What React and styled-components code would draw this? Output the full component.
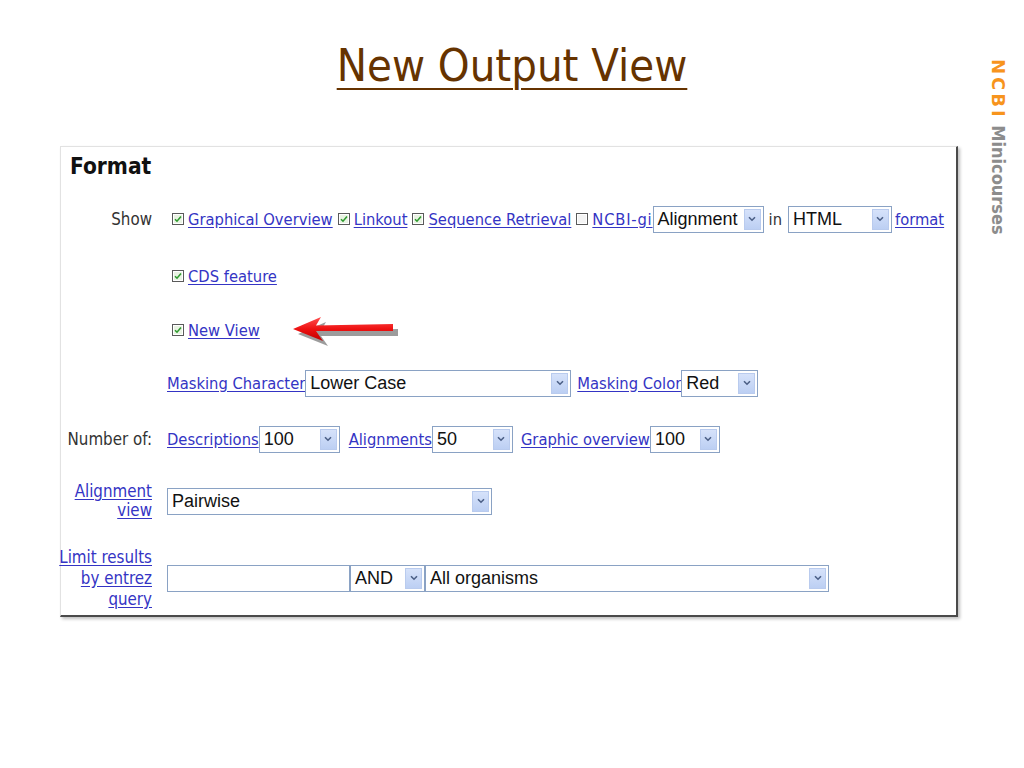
import styled, { createGlobalStyle } from "styled-components";

const GlobalStyle = createGlobalStyle`
  html, body {
    margin: 0;
    padding: 0;
    background: #ffffff;
  }
  body {
    font-family: "DejaVu Sans Condensed", "DejaVu Sans", sans-serif;
  }
`;

const Slide = styled.div`
  width: 1024px;
  height: 768px;
  display: grid;
  grid-template-columns: 60px 898px 1fr;
  grid-template-rows: 146px auto;
`;

const Title = styled.h1`
  grid-column: 1 / -1;
  grid-row: 1;
  margin: 0;
  padding-top: 38px;
  text-align: center;
  font-family: "DejaVu Sans Condensed", "DejaVu Sans", sans-serif;
  font-weight: normal;
  font-size: 45px;
  line-height: 56px;
  color: #663300;
  text-decoration: underline;
  text-decoration-thickness: 2px;
  text-underline-offset: 7px;
`;

const Side = styled.div`
  grid-column: 3;
  grid-row: 1 / 3;
  justify-self: end;
  margin-right: 16px;
  padding-top: 59px;
  writing-mode: vertical-rl;
  font-family: "DejaVu Sans Condensed", "DejaVu Sans", sans-serif;
  font-weight: bold;
  font-size: 18px;
  line-height: 20px;
  color: #8c8c8c;
`;

const Brand = styled.span`
  font-family: "DejaVu Sans", sans-serif;
  color: #f7941d;
  letter-spacing: 3px;
`;

const Card = styled.section`
  grid-column: 2;
  grid-row: 2;
  height: 471px;
  box-sizing: border-box;
  border: 1px solid #e2e2e2;
  border-right: 2px solid #4a4a4a;
  border-bottom: 2px solid #4a4a4a;
  box-shadow: 2px 2px 3px rgba(0, 0, 0, 0.25);
  background: #fff;
`;

const Heading = styled.h2`
  margin: 0;
  padding: 6px 9px 0;
  height: 39px;
  font-size: 22.5px;
  line-height: 26px;
  font-weight: bold;
  color: #111;
`;

const Form = styled.div`
  display: grid;
  grid-template-columns: 91px 1fr;
  column-gap: 15px;
  font-size: 16.4px;
  color: #333;
`;

const Label = styled.div`
  grid-column: 1;
  min-height: ${(p) => p.$h}px;
  display: flex;
  align-items: center;
  justify-content: flex-end;
  text-align: right;
  white-space: nowrap;
  font-size: 16.8px;
  line-height: ${(p) => p.$lh || 21}px;
`;

const Cell = styled.div`
  grid-column: 2;
  min-height: ${(p) => p.$h}px;
  display: flex;
  align-items: center;
  white-space: nowrap;
`;

const Link = styled.a`
  color: #3434c4;
  text-decoration: underline;
  text-underline-offset: 2px;
  cursor: pointer;
  margin-left: ${(p) => p.$ml || 0}px;
  letter-spacing: ${(p) => p.$ls || 0}px;
`;

const Text = styled.span`
  margin: 0 ${(p) => p.$mr || 0}px 0 ${(p) => p.$ml || 0}px;
  color: #333;
`;

const CheckItem = styled.span`
  display: inline-flex;
  align-items: center;
  gap: 4px;
  margin-left: 5px;
`;

const SelectBox = styled.div`
  box-sizing: border-box;
  width: ${(p) => p.$w}px;
  height: 27px;
  margin-left: ${(p) => p.$ml || 0}px;
  border: 1px solid #8aa2c4;
  background: #fff;
  display: flex;
  align-items: center;
  justify-content: space-between;
  padding: 0 2px 0 4px;
  font-family: "Liberation Sans", Arial, sans-serif;
  font-size: 18px;
  color: #111;
`;

const ArrowBtn = styled.span`
  width: 17px;
  height: 21px;
  box-sizing: border-box;
  border: 1px solid #b9cbee;
  background: linear-gradient(#d6e2fa, #bccff3);
  display: flex;
  align-items: center;
  justify-content: center;
`;

const TextInput = styled.div`
  box-sizing: border-box;
  width: 183px;
  height: 27px;
  border: 1px solid #8aa2c4;
  background: #fff;
`;

function Check({ on = true }) {
  return (
    <svg width="12" height="12" viewBox="0 0 12 12">
      <rect x="0.5" y="0.5" width="11" height="11" fill="#fff" stroke="#5a5a5a" />
      <rect x="2" y="2" width="8" height="8" fill={on ? "#e9f3e3" : "#f4f4f4"} />
      {on && (
        <path d="M3 6.2 L5 8.2 L9 3.6" fill="none" stroke="#2f9b2f" strokeWidth="1.6" />
      )}
    </svg>
  );
}

function Select({ w, value, ml }) {
  return (
    <SelectBox $w={w} $ml={ml}>
      <span>{value}</span>
      <ArrowBtn>
        <svg width="8" height="6" viewBox="0 0 8 6">
          <path d="M1 1.2 L4 4.2 L7 1.2" fill="none" stroke="#4b5f86" strokeWidth="1.6" />
        </svg>
      </ArrowBtn>
    </SelectBox>
  );
}

function RedArrow() {
  return (
    <svg width="112" height="34" viewBox="0 0 112 34" style={{ marginLeft: 31 }}>
      <defs>
        <linearGradient id="red" x1="0" y1="0" x2="0" y2="1">
          <stop offset="0" stopColor="#ff5050" />
          <stop offset="0.5" stopColor="#ee1111" />
          <stop offset="1" stopColor="#c00000" />
        </linearGradient>
      </defs>
      <path
        d="M4 19 L32 7 L27 15.5 L104 14 L104 21 L27 21 L34 31 Z"
        fill="#3a3a3a"
        opacity="0.5"
        transform="translate(3 2)"
      />
      <path d="M2 16 L30 4 L25 12.5 L102 11 L102 18 L25 18 L32 28 Z" fill="url(#red)" />
    </svg>
  );
}

export default function App() {
  return (
    <>
      <GlobalStyle />
      <Slide>
        <Title>New Output View</Title>
        <Side>
          <Brand>NCBI</Brand> Minicourses
        </Side>
        <Card>
          <Heading>Format</Heading>
          <Form>
            <Label $h={54}>Show</Label>
            <Cell $h={54}>
              <CheckItem>
                <Check />
                <Link>Graphical Overview</Link>
              </CheckItem>
              <CheckItem>
                <Check />
                <Link>Linkout</Link>
              </CheckItem>
              <CheckItem>
                <Check />
                <Link>Sequence Retrieval</Link>
              </CheckItem>
              <CheckItem>
                <Check on={false} />
                <Link $ls={0.8}>NCBI-gi</Link>
              </CheckItem>
              <Select w={111} value="Alignment" />
              <Text $ml={5} $mr={6}>in</Text>
              <Select w={104} value="HTML" />
              <Link $ml={3}>format</Link>
            </Cell>

            <Label $h={60} />
            <Cell $h={60}>
              <CheckItem>
                <Check />
                <Link>CDS feature</Link>
              </CheckItem>
            </Cell>

            <Label $h={48} />
            <Cell $h={48}>
              <CheckItem>
                <Check />
                <Link>New View</Link>
              </CheckItem>
              <RedArrow />
            </Cell>

            <Label $h={58} />
            <Cell $h={58}>
              <Link>Masking Character</Link>
              <Select w={266} value="Lower Case" />
              <Link $ml={6}>Masking Color</Link>
              <Select w={77} value="Red" />
            </Cell>

            <Label $h={54}>Number of:</Label>
            <Cell $h={54}>
              <Link>Descriptions</Link>
              <Select w={81} value="100" />
              <Link $ml={9}>Alignments</Link>
              <Select w={81} value="50" />
              <Link $ml={8}>Graphic overview</Link>
              <Select w={70} value="100" />
            </Cell>

            <Label $h={70} $lh={19}>
              <Link>
                Alignment
                <br />
                view
              </Link>
            </Label>
            <Cell $h={70}>
              <Select w={325} value="Pairwise" />
            </Cell>

            <Label $h={84}>
              <Link>
                Limit results
                <br />
                by entrez
                <br />
                query
              </Link>
            </Label>
            <Cell $h={84}>
              <TextInput />
              <Select w={75} value="AND" />
              <Select w={404} value="All organisms" />
            </Cell>
          </Form>
        </Card>
      </Slide>
    </>
  );
}
